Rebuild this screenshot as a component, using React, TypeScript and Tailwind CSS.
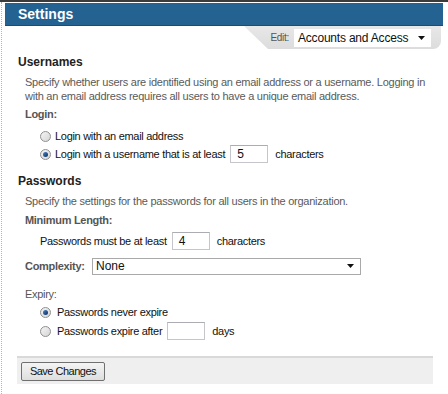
import React from "react";

const font = "font-['Liberation_Sans',Arial,sans-serif]";

const Radio: React.FC<{ checked?: boolean }> = ({ checked }) => (
  <span className="relative inline-flex h-[11px] w-[11px] shrink-0 items-center justify-center rounded-full border border-[#8e8f8f] bg-gradient-to-br from-[#f4f4f4] to-[#d6d6d6]">
    {checked && (
      <span className="h-[5px] w-[5px] rounded-full bg-gradient-to-br from-[#4a8ad0] to-[#0e2a5c]" />
    )}
  </span>
);

const TextBox: React.FC<{ value?: string }> = ({ value }) => (
  <span className="inline-flex h-[18px] w-[38px] shrink-0 items-center border border-[#c4c6cb] border-t-[#abadb3] bg-white pl-[6px] text-[12px] tracking-normal text-[#111]">
    {value}
  </span>
);

const Arrow = () => (
  <svg width="7" height="4" viewBox="0 0 7 4">
    <path d="M0 0h7L3.5 4z" fill="#111" />
  </svg>
);

export default function App() {
  return (
    <div
      className={`${font} relative h-[394px] w-[448px] overflow-hidden border-t-2 border-[#3b3b3b] bg-white`}
    >
      <div className="absolute bottom-0 left-[1px] top-0 border-l border-dotted border-[#b5b5b5]" />

      {/* header */}
      <div className="ml-[5px] mr-[5px] mt-[1px] flex h-[23px] items-center border-b border-[#1b4d72] bg-[#246292] pl-[13px]">
        <span className="text-[14px] font-bold text-white">Settings</span>
      </div>

      {/* edit tab */}
      <div className="flex h-[23px] justify-end pr-[7px]">
        <div className="flex w-[197px] items-center justify-end rounded-br-[8px] bg-gradient-to-b from-[#e8e8e8] to-[#dcdcdc] pr-[10px] [clip-path:polygon(0_0,100%_0,100%_100%,24px_100%)]">
          <span className="mr-[5px] text-[10px] tracking-[-0.3px] text-[#555]">Edit:</span>
          <div className="flex h-[18px] w-[137px] items-center justify-between bg-white pl-[4px] pr-[6px] text-[12px] tracking-[-0.2px] text-[#111]">
            <span>Accounts and Access</span>
            <Arrow />
          </div>
        </div>
      </div>

      <div className="pl-[18px] pr-[15px] text-[#111]">
        {/* Usernames */}
        <div className="mt-[6px] text-[12px] font-bold leading-[15px] text-[#222]">Usernames</div>
        <p className="mt-[5px] pl-[7px] text-[11px] leading-[14px] tracking-[-0.25px] text-[#5a5a5a]">
          Specify whether users are identified using an email address or a username. Logging in
          <br />
          with an email address requires all users to have a unique email address.
        </p>
        <div className="mt-[4px] pl-[7px] text-[11px] font-bold leading-[14px] tracking-[-0.3px] text-[#555]">
          Login:
        </div>
        <div className="mt-[6px] flex h-[18px] items-center pl-[22px] text-[11px] tracking-[-0.3px]">
          <Radio />
          <span className="ml-[4px]">Login with an email address</span>
        </div>
        <div className="flex h-[18px] items-center pl-[22px] text-[11px] tracking-[-0.3px]">
          <Radio checked />
          <span className="ml-[4px] mr-[5px]">Login with a username that is at least</span>
          <TextBox value="5" />
          <span className="ml-[7px]">characters</span>
        </div>

        {/* Passwords */}
        <div className="mt-[11px] text-[12px] font-bold leading-[15px] text-[#222]">Passwords</div>
        <p className="mt-[5px] pl-[7px] text-[11px] leading-[14px] tracking-[-0.25px] text-[#5a5a5a]">
          Specify the settings for the passwords for all users in the organization.
        </p>
        <div className="mt-[5px] pl-[7px] text-[11px] font-bold leading-[14px] tracking-[-0.3px] text-[#555]">
          Minimum Length:
        </div>
        <div className="mt-[5px] flex h-[18px] items-center pl-[22px] text-[11px] tracking-[-0.3px]">
          <span className="mr-[5px]">Passwords must be at least</span>
          <TextBox value="4" />
          <span className="ml-[7px]">characters</span>
        </div>
        <div className="mt-[7px] flex h-[18px] items-center pl-[7px] text-[11px]">
          <span className="w-[67px] font-bold tracking-[-0.3px] text-[#555]">Complexity:</span>
          <div className="flex h-[17px] w-[269px] items-center justify-between border border-[#a9a9a9] bg-white pl-[3px] pr-[6px] text-[12px]">
            <span>None</span>
            <Arrow />
          </div>
        </div>
        <div className="mt-[12px] pl-[7px] text-[11px] leading-[14px] tracking-[-0.3px] text-[#555]">Expiry:</div>
        <div className="mt-[2px] flex h-[18px] items-center pl-[22px] text-[11px] tracking-[-0.3px]">
          <Radio checked />
          <span className="ml-[6px]">Passwords never expire</span>
        </div>
        <div className="mt-[1px] flex h-[18px] items-center pl-[22px] text-[11px] tracking-[-0.3px]">
          <Radio />
          <span className="ml-[6px] mr-[5px]">Passwords expire after</span>
          <TextBox />
          <span className="ml-[7px]">days</span>
        </div>
      </div>

      {/* footer */}
      <div className="ml-[17px] mr-[15px] mt-[16px] flex h-[28px] items-start border-t-2 border-[#d9d9d9] bg-[#efefef] pl-[4px] pt-[4px]">
        <button className="h-[19px] w-[84px] rounded-[2px] border border-[#707070] bg-gradient-to-b from-[#f4f4f4] to-[#dedede] text-[11px] leading-[17px] tracking-[-0.5px] text-[#111]">
          Save Changes
        </button>
      </div>
    </div>
  );
}
